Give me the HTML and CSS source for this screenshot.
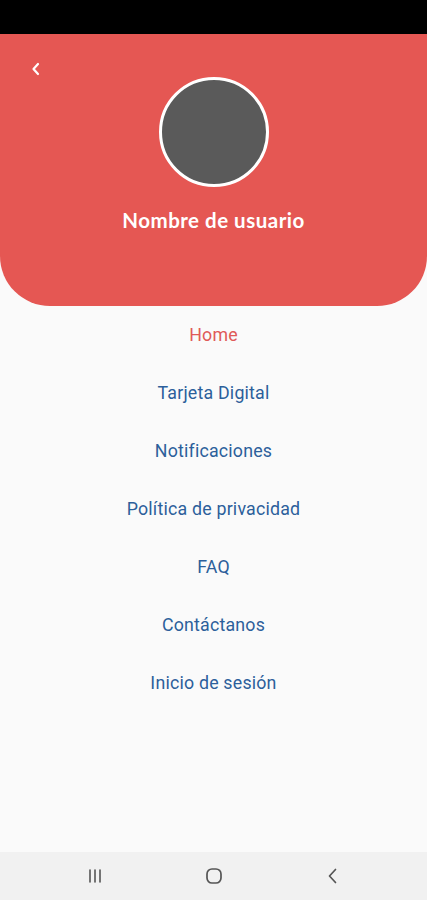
FILE: index.html
```html
<!DOCTYPE html>
<html lang="es">
<head>
<meta charset="utf-8">
<link rel="stylesheet" href="styles.css">
</head>
<body>
<div class="screen">
  <div class="statusbar"></div>
  <header class="header">
    <div class="header-top">
      <svg class="back" width="12" height="16" viewBox="0 0 12 16"><path d="M8 3 L3.5 8 L8 13" fill="none" stroke="#fff" stroke-width="2.2" stroke-linecap="round" stroke-linejoin="round"/></svg>
    </div>
    <div class="avatar"></div>
    <div class="username">Nombre de usuario</div>
  </header>
  <nav class="menu">
    <a class="item active">Home</a>
    <a class="item">Tarjeta Digital</a>
    <a class="item">Notificaciones</a>
    <a class="item">Política de privacidad</a>
    <a class="item">FAQ</a>
    <a class="item">Contáctanos</a>
    <a class="item">Inicio de sesión</a>
  </nav>
  <div class="navbar">
    <svg width="20" height="20" viewBox="0 0 20 20"><g stroke="#555" stroke-width="1.6" stroke-linecap="round"><line x1="5" y1="4" x2="5" y2="16"/><line x1="10" y1="4" x2="10" y2="16"/><line x1="15" y1="4" x2="15" y2="16"/></g></svg>
    <svg width="20" height="20" viewBox="0 0 20 20"><rect x="3" y="3" width="14" height="14" rx="5" fill="none" stroke="#555" stroke-width="1.7"/></svg>
    <svg width="20" height="20" viewBox="0 0 20 20"><path d="M12.5 3.5 L6.5 10 L12.5 16.5" fill="none" stroke="#555" stroke-width="1.7" stroke-linecap="round" stroke-linejoin="round"/></svg>
  </div>
</div>
</body>
</html>
```
FILE: styles.css
```css
* { box-sizing: border-box; }
html, body { margin: 0; padding: 0; }
body { background: #fafafa; font-family: Roboto, "Noto Sans", sans-serif; }
.screen { width: 427px; height: 900px; display: flex; flex-direction: column; overflow: hidden; }
.statusbar { height: 34px; background: #000; flex-shrink: 0; }
.header {
  height: 272px; flex-shrink: 0;
  background: #e55753;
  border-radius: 0 0 50px 50px;
  display: flex; flex-direction: column; align-items: center;
}
.header-top { align-self: stretch; height: 43px; padding: 27px 0 0 30px; }
.back { display: block; }
.avatar {
  width: 110px; height: 110px; border-radius: 50%;
  background: #5a5a5a; border: 3px solid #fff;
}
.username {
  margin-top: 21px;
  color: #fff; font-family: Lato, "Open Sans", sans-serif; font-weight: 700; font-size: 20.5px;
  letter-spacing: 0.5px;
}
.menu { flex: 1; display: flex; flex-direction: column; align-items: center; padding-bottom: 2px; }
.item {
  height: 58px; display: flex; align-items: center; justify-content: center;
  font-size: 17.8px; letter-spacing: 0.2px; color: #2c5f9b; text-decoration: none;
  padding-bottom: 2px;
}
.item.active { color: #e05a58; }
.navbar {
  height: 48px; flex-shrink: 0; background: #f1f1f1;
  display: flex; align-items: center; justify-content: space-around;
  padding: 0 35px;
}
```
